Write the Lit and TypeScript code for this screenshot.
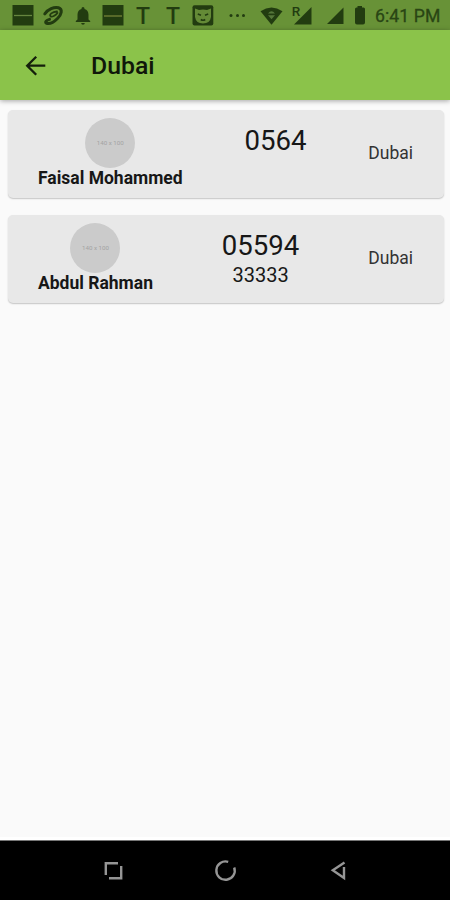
import { LitElement, html, css, nothing } from "lit";
import { customElement, property } from "lit/decorators.js";

interface Contact {
  name: string;
  phone: string;
  extra?: string;
  city: string;
  size: string;
}

const contacts: Contact[] = [
  { name: "Faisal Mohammed", phone: "0564", city: "Dubai", size: "140 x 100" },
  { name: "Abdul Rahman", phone: "05594", extra: "33333", city: "Dubai", size: "140 x 100" },
];

@customElement("status-bar")
class StatusBar extends LitElement {
  static styles = css`
    :host {
      display: flex;
      height: 30px;
      background: #689237;
      color: #223c10;
      font-family: Roboto, sans-serif;
    }
    .icons {
      flex: none;
      display: block;
    }
    .letter {
      font: 500 23px Roboto, sans-serif;
    }
    .roaming {
      font: 500 13.5px Roboto, sans-serif;
    }
    .time {
      font-size: 17.6px;
      line-height: 33px;
      white-space: nowrap;
      letter-spacing: 0.1px;
      color: #294514;
      -webkit-text-stroke: 0.3px #294514;
    }
  `;
  render() {
    return html`
      <svg class="icons" width="375" height="30" viewBox="0 0 375 30" fill="#223c10">
        <rect x="12.5" y="5" width="21" height="20.5" />
        <path d="M14 15.5h18" stroke="#66853f" stroke-width="1.3" />
        <path d="M44.800 13.800C48 9.500 54 6.600 58.500 7.800C63 9.200 61.500 14.500 57.500 18.500C54 22 49.500 24.300 46.500 23.300C44.500 22 46.500 20.200 49.500 19.400" fill="none" stroke="#223c10" stroke-width="3" stroke-linecap="round" stroke-linejoin="round" />
        <path d="M57 11.500C52 12 49 14.500 50.500 16.200C52 17.500 55.500 15.500 57.500 13" fill="none" stroke="#223c10" stroke-width="1.800" stroke-linecap="round" />
        <path d="M83 7a1.500 1.500 0 0 1 1.500 1.500v.5c2.700.7 4 3 4 5.700v4.800l1.700 1.500v1H75.800v-1l1.700-1.500v-4.800c0-2.700 1.300-5 4-5.700v-.5A1.500 1.500 0 0 1 83 7zM81.200 23h3.600a1.800 1.800 0 0 1-3.600 0z" />
        <rect x="102.500" y="5" width="21" height="20.500" />
        <path d="M104 16h18" stroke="#758338" stroke-width="1.300" />
        <text class="letter" x="143" y="23.700" text-anchor="middle">T</text>
        <text class="letter" x="173" y="23.700" text-anchor="middle">T</text>
        <rect x="192.500" y="5.200" width="20.800" height="20.300" rx="2" />
        <path d="M195 8.500l4 1.500q4-1 8 0L211 8.500v8.500q-1 6.500-8 6.500t-8-6.500z" fill="#648a36" />
        <path d="M197.800 14l3.200 1.200M208.200 14l-3.200 1.200M200.800 19.500q2.200 1.600 4.400 0" stroke="#223c10" stroke-width="1.600" fill="none" />
        <circle cx="231" cy="15.500" r="1.500" /><circle cx="237.500" cy="15.500" r="1.500" /><circle cx="243.500" cy="15.500" r="1.500" />
        <path d="M260.500 11.200Q271.500 3.800 282.500 11.200L271.500 24.800z" />
        <path d="M268 13.500q3.500-4.500 7 0zM268 15.200h7l-3.500 4z" fill="#55763a" />
        <text class="roaming" x="291.800" y="16.200">R</text>
        <path d="M311.500 7v17.500H294z" />
        <path d="M343.500 7.500v16.500H327z" />
        <path d="M357.500 6h4.500v1.500h1.500a1.500 1.500 0 0 1 1.500 1.500v13.500a2 2 0 0 1-2 2h-6a2 2 0 0 1-2-2V9a1.500 1.500 0 0 1 1.500-1.500h1z" />
      </svg>
      <span class="time">6:41 PM</span>
    `;
  }
}

@customElement("contact-card")
class ContactCard extends LitElement {
  @property({ attribute: false }) contact!: Contact;

  static styles = css`
    :host {
      display: flex;
      box-sizing: border-box;
      justify-content: space-between;
      height: 88.5px;
      padding: 0 30.5px 0 30px;
      border-radius: 5px;
      background: #e8e8e8;
      box-shadow: 0 1px 1.5px rgba(0, 0, 0, 0.22);
      font-family: Roboto, sans-serif;
      color: #171717;
      white-space: nowrap;
    }
    .person,
    .numbers {
      display: flex;
      flex-direction: column;
      align-items: center;
    }
    .avatar {
      display: flex;
      align-items: center;
      justify-content: center;
      width: 50px;
      height: 50px;
      margin-top: 8px;
      border-radius: 50%;
      background: #cbcbcb;
      color: #a3a3a3;
      font-size: 6.2px;
    }
    .name {
      font-size: 17.5px;
      font-weight: 700;
      line-height: 21px;
    }
    .phone {
      margin-top: 14px;
      font-size: 27.6px;
      line-height: 34px;
    }
    .extra {
      font-size: 20px;
      line-height: 24px;
    }
    .city {
      align-self: center;
      margin-bottom: 1.5px;
      font-size: 17.5px;
      line-height: 22px;
      color: #333;
    }
  `;
  render() {
    const c = this.contact;
    return html`
      <div class="person">
        <div class="avatar">${c.size}</div>
        <div class="name">${c.name}</div>
      </div>
      <div class="numbers">
        <div class="phone">${c.phone}</div>
        ${c.extra ? html`<div class="extra">${c.extra}</div>` : nothing}
      </div>
      <div class="city">${c.city}</div>
    `;
  }
}

@customElement("app-root")
class AppRoot extends LitElement {
  static styles = css`
    :host {
      display: flex;
      flex-direction: column;
      height: 900px;
      background: #fafafa;
      font-family: Roboto, sans-serif;
    }
    .toolbar {
      flex: none;
      box-sizing: border-box;
      display: flex;
      align-items: center;
      height: 70px;
      padding: 2px 0 0 21px;
      background: #8bc34a;
      box-shadow: 0 1px 5px rgba(0, 0, 0, 0.35);
    }
    .back {
      flex: none;
      display: block;
    }
    .title {
      margin: 0 0 0 40px;
      font-size: 24.8px;
      font-weight: 500;
      line-height: 30px;
      color: #10180a;
    }
    .list {
      flex: 1;
      display: flex;
      flex-direction: column;
      gap: 16.5px;
      padding: 9.5px 6.500px 0 8px;
    }
    .nav {
      flex: none;
      display: block;
      background: #000;
      border-top: 1px solid #777;
      box-shadow: 0 -3px 0 #fff;
    }
  `;
  render() {
    return html`
      <status-bar></status-bar>
      <header class="toolbar">
        <svg class="back" width="30" height="30" viewBox="0 0 30 30" fill="none" stroke="#14200b" stroke-width="2.300">
          <path d="M24.300 14.700H6.800M15.200 5.700L6.200 14.700l9 9" />
        </svg>
        <h1 class="title">Dubai</h1>
      </header>
      <main class="list">
        ${contacts.map((c) => html`<contact-card .contact=${c}></contact-card>`)}
      </main>
      <svg class="nav" width="450" height="59" viewBox="0 841 450 59" fill="none" stroke="#959595" stroke-width="2.400">
        <path d="M118 863.300H105.800V875M121.200 866V878.200H109" />
        <path d="M228.200 861.800A9.200 9.200 0 1 0 234.200 867.500" />
        <path d="M344.500 862.500L332.800 870.300L344 878V867" />
      </svg>
    `;
  }
}
